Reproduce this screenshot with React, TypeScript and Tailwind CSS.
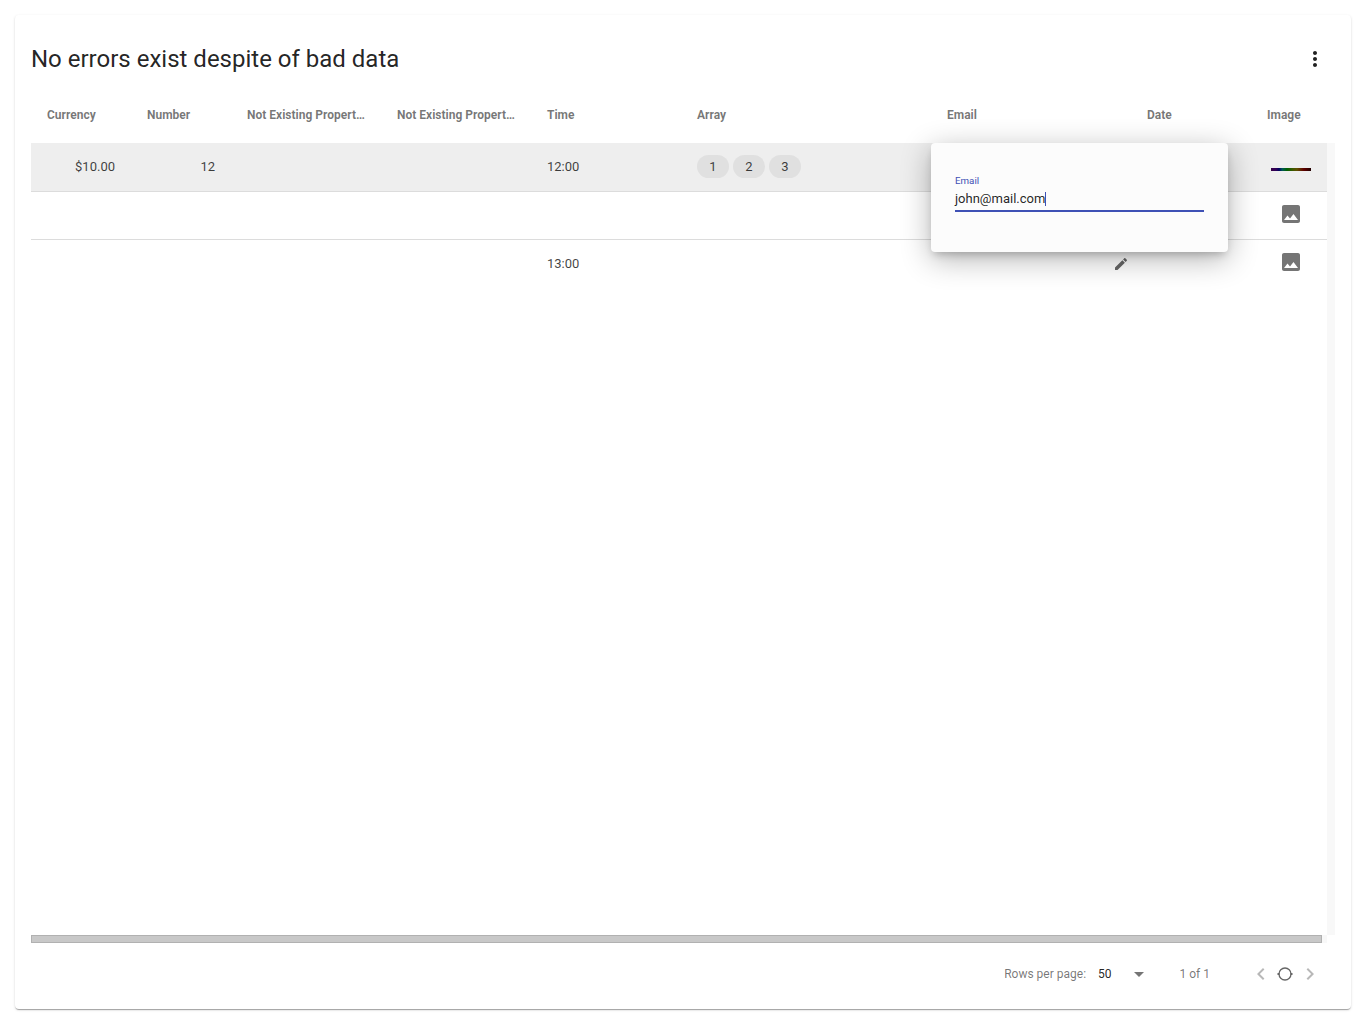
import React from "react";

const columns = [
  { title: "Currency", width: "w-[100px]" },
  { title: "Number", width: "w-[100px]" },
  { title: "Not Existing Propert…", width: "w-[150px]" },
  { title: "Not Existing Propert…", width: "w-[150px]" },
  { title: "Time", width: "w-[150px]" },
  { title: "Array", width: "w-[250px]" },
  { title: "Email", width: "w-[200px]" },
  { title: "Date", width: "w-[120px]" },
  { title: "Image", width: "w-[76px]" },
];

function Icon({ d, className }: { d: string; className: string }) {
  return (
    <svg viewBox="0 0 24 24" fill="currentColor" className={className}>
      <path d={d} />
    </svg>
  );
}

const MORE =
  "M12 8c1.1 0 2-.9 2-2s-.9-2-2-2-2 .9-2 2 .9 2 2 2zm0 2c-1.1 0-2 .9-2 2s.9 2 2 2 2-.9 2-2-.9-2-2-2zm0 6c-1.1 0-2 .9-2 2s.9 2 2 2 2-.9 2-2-.9-2-2-2z";
const PICTURE =
  "M21 19V5c0-1.1-.9-2-2-2H5c-1.1 0-2 .9-2 2v14c0 1.1.9 2 2 2h14c1.1 0 2-.9 2-2zM5 18l3.500-4.500 2.500 3.010L14.500 12l4.500 6z";
const PENCIL =
  "M3 17.25V21h3.75L17.81 9.94l-3.75-3.75L3 17.25zM20.71 7.04c.39-.39.39-1.02 0-1.41l-2.34-2.34c-.39-.39-1.02-.39-1.41 0l-1.83 1.83 3.75 3.75 1.83-1.83z";
const LEFT = "M15.41 7.41L14 6l-6 6 6 6 1.41-1.41L10.83 12z";
const RIGHT = "M10 6L8.590 7.410 13.170 12l-4.580 4.590L10 18l6-6z";

function Cells({ values }: { values: Record<number, React.ReactNode> }) {
  return (
    <>
      {columns.map((c, i) => (
        <div
          key={i}
          className={`${c.width} flex shrink-0 items-center px-4 ${i < 2 ? "justify-end" : ""}`}
        >
          {values[i]}
        </div>
      ))}
    </>
  );
}

function Placeholder() {
  return <Icon d={PICTURE} className="-mt-[3px] ml-3 size-6 shrink-0 text-[#757575]" />;
}

export default function App() {
  return (
    <div className="h-[1024px] w-[1366px] bg-white px-[15px] pt-[15px] font-['Roboto',sans-serif] text-[13px] text-black/75">
      <main className="relative flex h-[994px] flex-col rounded-[4px] bg-white px-4 shadow-[0_2px_1px_-1px_rgba(0,0,0,0.2),0_1px_1px_0_rgba(0,0,0,0.14),0_1px_3px_0_rgba(0,0,0,0.12)]">
        <header className="flex h-[72px] shrink-0 items-center justify-between pt-4 pr-2">
          <h1 className="text-[24px] leading-8 text-black/87">No errors exist despite of bad data</h1>
          <Icon d={MORE} className="size-6 text-black/87" />
        </header>
        <div className="flex h-14 shrink-0 pb-[1px]">
          {columns.map((c, i) => (
            <div key={i} className={`${c.width} flex shrink-0 items-center px-4 text-[12px] font-bold text-black/54`}>
              <span className="whitespace-nowrap">{c.title}</span>
            </div>
          ))}
        </div>
        <div className="flex h-[792px] shrink-0">
          <div className="w-[1296px]">
            <div className="flex h-[49px] border-b border-[#dcdcdc] bg-[#eee]">
              <Cells
                values={{
                  0: "$10.00",
                  1: "12",
                  4: "12:00",
                  5: (
                    <div className="-mt-px flex gap-1">
                      {[1, 2, 3].map((n) => (
                        <span key={n} className="flex h-[23px] w-8 items-center justify-center rounded-full bg-[#e0e0e0]">
                          {n}
                        </span>
                      ))}
                    </div>
                  ),
                  8: (
                    <span className="mt-[5px] ml-1 h-[3px] w-10 shrink-0 bg-[linear-gradient(90deg,#380048_0%,#300058_12%,#000060_20%,#005858_28%,#006000_40%,#405800_55%,#605000_65%,#600000_82%,#200000_100%)]" />
                  ),
                }}
              />
            </div>
            <div className="flex h-12 border-b border-[#dcdcdc]">
              <Cells values={{ 8: <Placeholder /> }} />
            </div>
            <div className="flex h-12 pb-px">
              <Cells
                values={{
                  4: <span className="mt-px">13:00</span>,
                  6: <Icon d={PENCIL} className="ml-[166px] size-4 shrink-0 text-[#666]" />,
                  8: <Placeholder />,
                }}
              />
            </div>
          </div>
          <div className="w-2 bg-[#f8f8f8]" />
        </div>
        <div className="flex h-2 w-[1296px] shrink-0 bg-[#f8f8f8]">
          <div className="w-[1291px] border border-[#b1b1b1] bg-[#c8c8c8]" />
        </div>
        <footer className="flex h-[62px] shrink-0 items-center justify-end pr-[13px] text-[12px] text-black/54">
          <span>Rows per page:</span>
          <span className="ml-3 text-black/87">50</span>
          <span className="ml-[22px] border-x-[5px] border-t-[5px] border-x-transparent border-t-[#757575]" />
          <span className="ml-9">1 of 1</span>
          <Icon d={LEFT} className="ml-[39px] size-6 text-[#b8b8b8]" />
          <svg viewBox="0 0 24 24" fill="none" stroke="#666" strokeWidth="1.3" className="size-6">
            <circle cx="12" cy="12" r="6" />
            <path d="M4.500 12h2M17.500 12h2" strokeWidth="2" />
          </svg>
          <Icon d={RIGHT} className="ml-px size-6 text-[#b8b8b8]" />
        </footer>
        <div className="absolute top-[128px] left-[916px] h-[109px] w-[297px] rounded-[4px] bg-[#fcfcfc] px-6 pt-8 shadow-[0_5px_8px_-3px_rgba(0,0,0,0.22),0_7px_30px_0_rgba(0,0,0,0.3)]">
          <div className="text-[9.750px] leading-[12px] text-[#3f51b5]">Email</div>
          <div className="flex h-[25px] items-center border-b-2 border-[#3f51b5] text-black/87">
            <span>john@mail.com</span>
            <span className="h-[14px] w-px bg-[#3f51b5]" />
          </div>
        </div>
      </main>
    </div>
  );
}
